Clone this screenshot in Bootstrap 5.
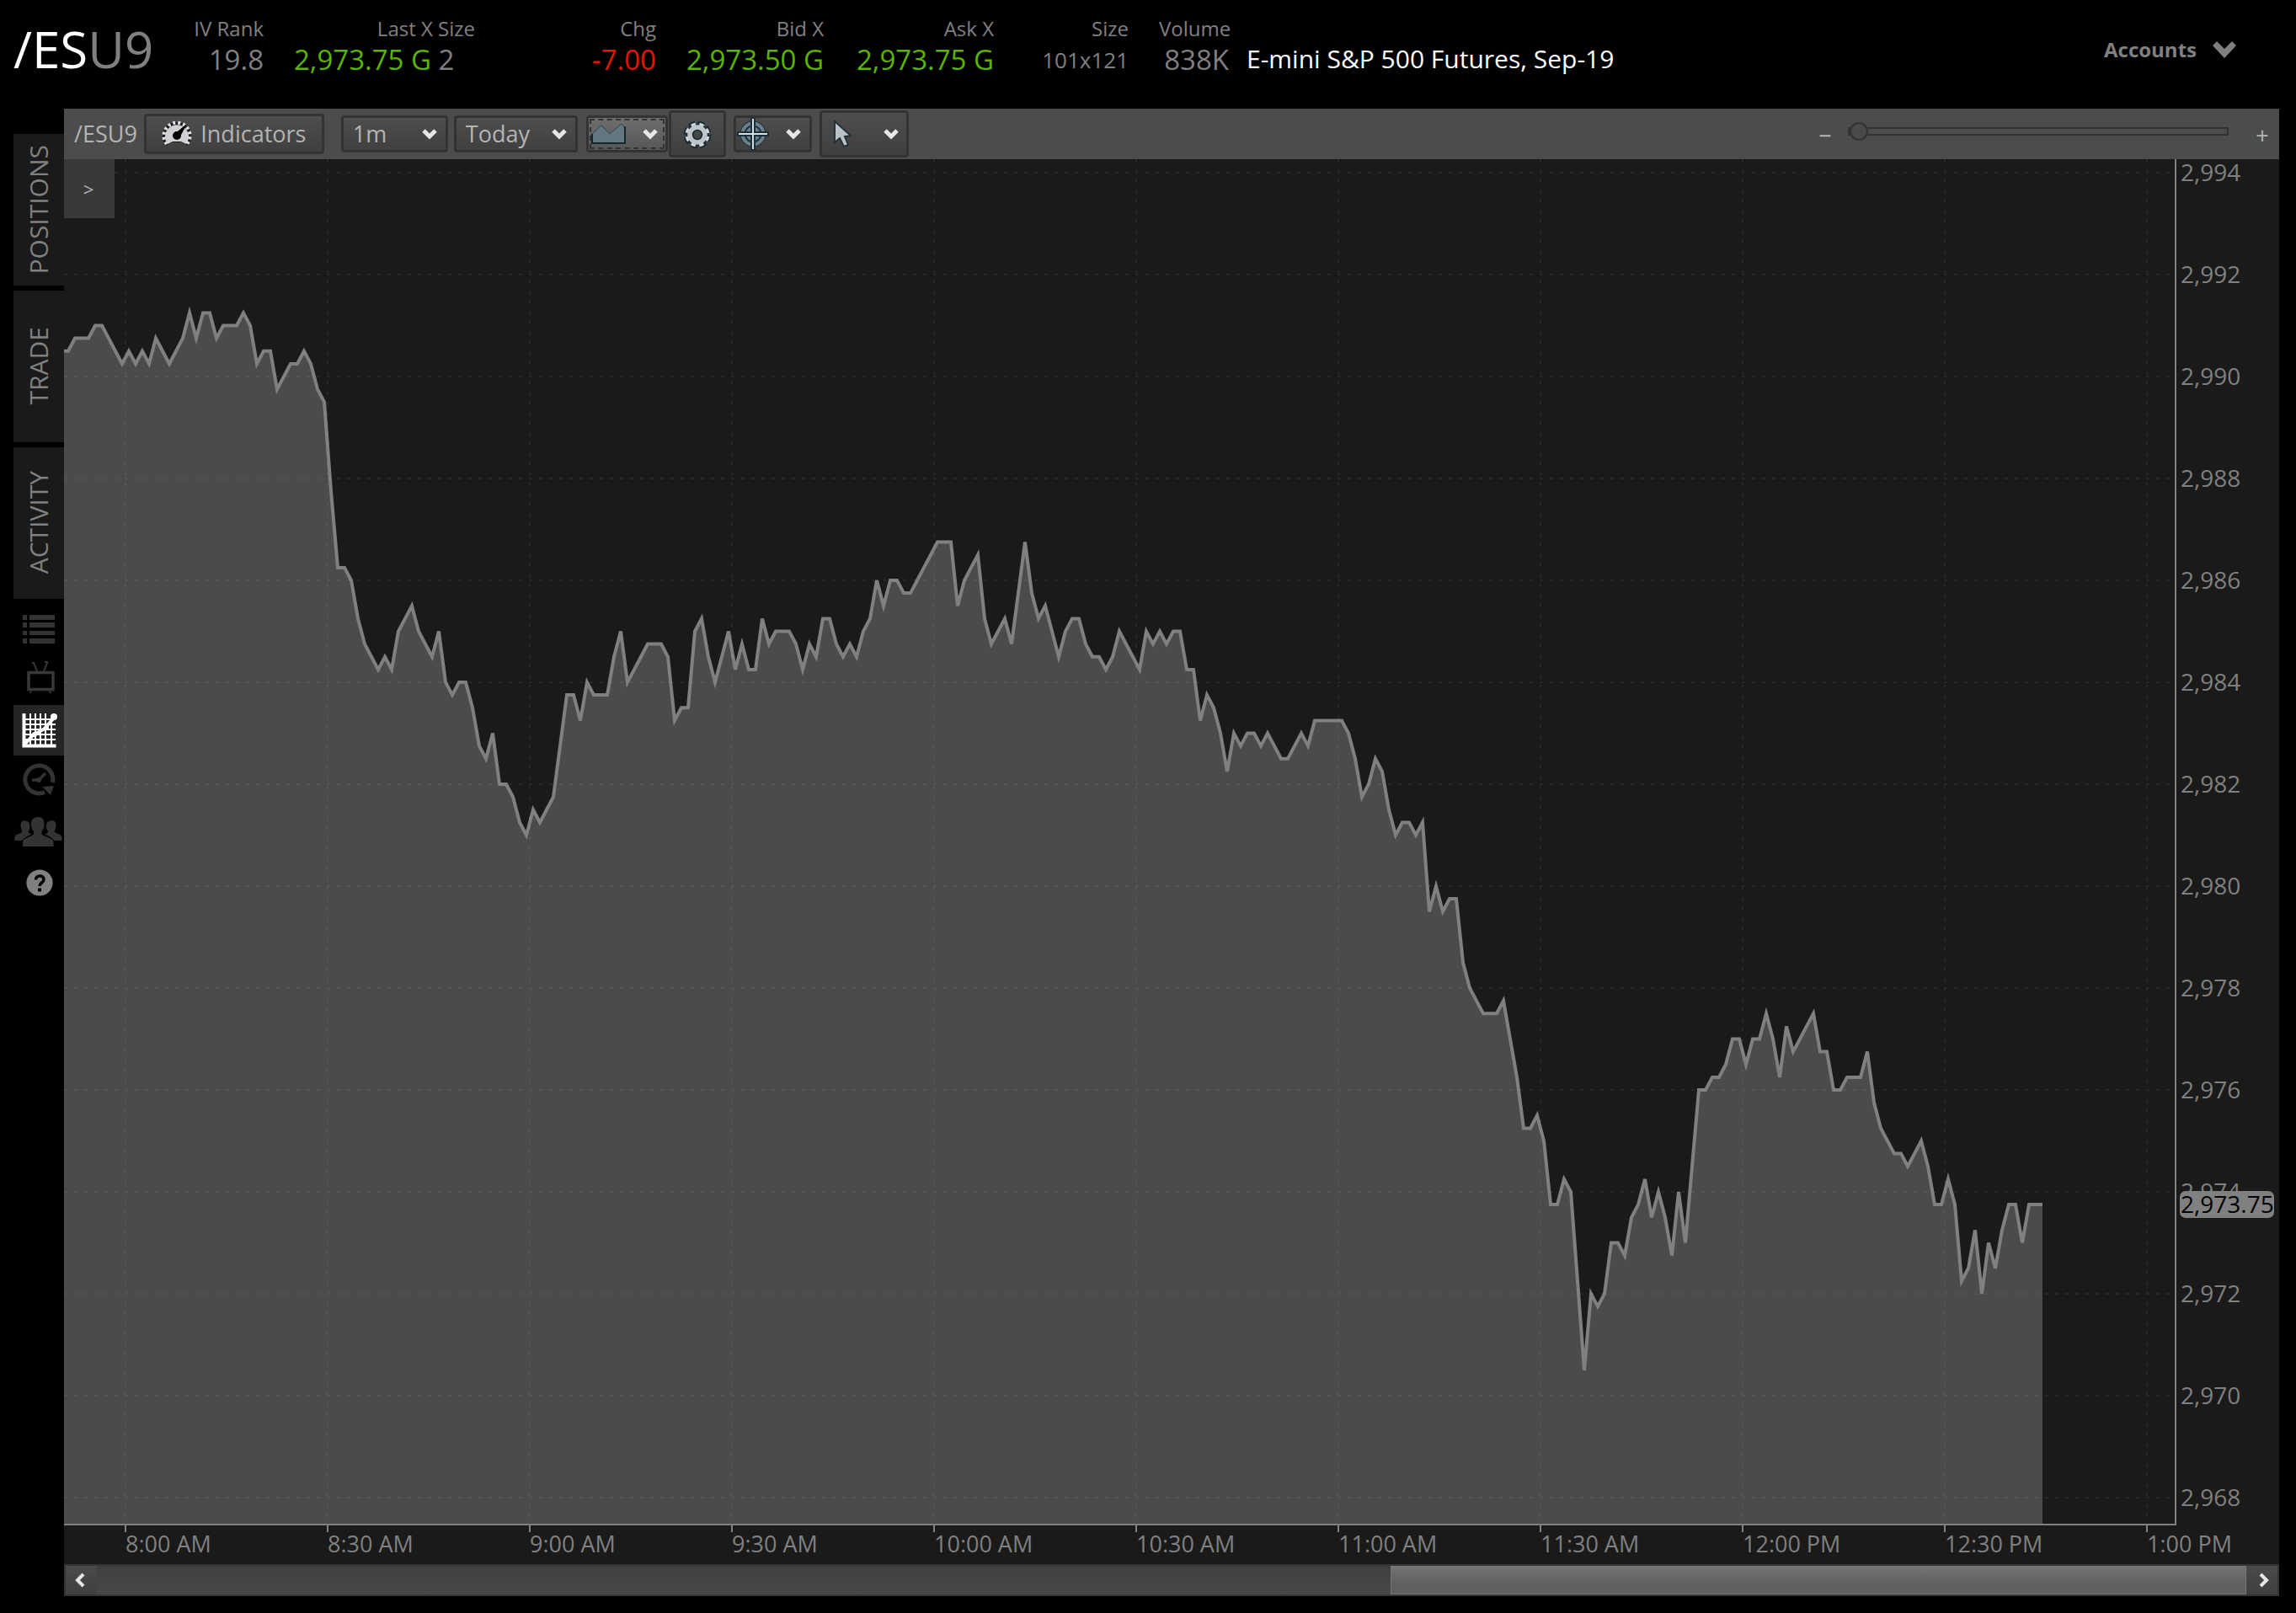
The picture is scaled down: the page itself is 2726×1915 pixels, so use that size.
<!DOCTYPE html>
<html lang="en">
<head>
<meta charset="utf-8">
<meta name="viewport" content="width=device-width, initial-scale=1">
<title>/ESU9 chart</title>
<link href="https://cdn.jsdelivr.net/npm/bootstrap@5.3.0/dist/css/bootstrap.min.css" rel="stylesheet">
<style>
  body { background: #000; color: #808080; font-family: "Open Sans", "Noto Sans", sans-serif; font-size: 27px; line-height: 36px; }
  .quote-bar { height: 129px; padding: 0 68px 0 16px; }
  .symbol { font-size: 60px; line-height: 80px; width: 212px; margin-top: 18px; }
  .quote { gap: 36px; padding-top: 18px; }
  .quote-item { text-align: right; white-space: nowrap; font-size: 33px; line-height: 42px; }
  .quote-item dt { font-size: 24px; line-height: 32px; font-weight: 400; }
  .quote-item dd { margin: 0; }
  .q-iv { width: 85px; } .q-last { width: 215px; } .q-chg { width: 179px; } .q-bid { width: 163px; }
  .q-ask { width: 166px; } .q-size { width: 124px; } .q-vol { width: 83px; }
  .q-size dd { font-size: 26px; }
  .up { color: #5ab400; } .down { color: #e01800; }
  .instrument { font-size: 30px; line-height: 40px; margin: 50px 0 0 21px; color: #fff; white-space: nowrap; }
  .accounts { font-weight: 700; font-size: 24px; line-height: 36px; color: #808080; background: none; border: 0; padding: 0; margin-top: 41px; gap: 18px; }

  .side { width: 60px; margin-left: 16px; padding-top: 30px; gap: 6px; }
  .side-tab { height: 180px; width: 60px; background: #1a1a1a; color: #808080; border: 0; padding: 6px 0 0; font-size: 30px; }
  .side-tab span { writing-mode: vertical-rl; transform: rotate(180deg); line-height: 60px; }
  .side-icon { display: block; width: 60px; height: 60px; border: 0; padding: 0; background: none; }
  .side-icon.active { background: #252525; }
  .side-icon svg { display: block; }

  .panel { margin-right: 20px; margin-bottom: 20px; background: #1a1a1a; }
  .tools { height: 60px; background: #4c4c4c; color: #b4b4b4; padding: 0 11px 0 12px; }
  .tool { height: 44px; border: 3px solid #333; border-radius: 4px; background: linear-gradient(#4e4e4e, #3f3f3f); color: #b4b4b4; padding: 0; font-size: 27px; line-height: 34px; }
  .tool.tall { height: 56px; } .tool.wide { height: 48px; }
  select.tool { appearance: none; padding-left: 11px; background: url("data:image/svg+xml,%3Csvg xmlns='http://www.w3.org/2000/svg' viewBox='0 0 20 14'%3E%3Cpath d='M3 3l7 7 7-7' fill='none' stroke='%23e6e6e6' stroke-width='5'/%3E%3C/svg%3E") no-repeat right 9px center / 20px 14px, linear-gradient(#4e4e4e, #3f3f3f); }
  .t-ind { width: 214px; margin-left: 8px; gap: 10px; }
  .t-int { width: 127px; margin-left: 20px; }
  .t-rng { width: 147px; margin-left: 7px; }
  .t-type { width: 97px; margin-left: 10px; padding: 0 8px 0 3px; background: linear-gradient(#6e6e6e, #565656); outline: 2px dashed #333; outline-offset: -6px; }
  .t-gear { width: 68px; margin-left: 1px; }
  .t-cross { width: 93px; margin-left: 9px; padding: 0 9px 0 1px; }
  .t-ptr { width: 106px; margin-left: 9px; padding: 0 8px 0 13px; }
  .zoom-sign { background: none; border: 0; color: #b4b4b4; padding: 0; width: 18px; line-height: 36px; margin-top: 4px; }
  .zoom-range { appearance: none; background: none; width: 452px; height: 24px; margin: 0 31px 6px 18px; }
  .zoom-range::-webkit-slider-runnable-track { height: 10px; border: 2px solid #333; background: #4c4c4c; }
  .zoom-range::-webkit-slider-thumb { appearance: none; width: 22px; height: 22px; margin-top: -8px; border: 2px solid #333; border-radius: 50%; background: #4a4a4a; }

  .plot { min-height: 400px; position: relative; }
  .plot > svg { position: absolute; inset: 0; width: 100%; height: 100%; display: block; overflow: visible; }
  .plot text { font-size: 27px; fill: #808080; }
  .plot .price { font-size: 28px; }
  .plot .last-price { fill: #000; }
  .flyout { position: absolute; left: 0; top: 0; width: 60px; height: 70px; border: 0; padding: 0 2px 0 0; background: #393939; color: #b4b4b4; font-size: 22px; }

  .hscroll { height: 38px; border: 2px solid #333; background: linear-gradient(#3f3f3f, #484848); }
  .hscroll button { width: 37px; border: 0; padding: 0; background: linear-gradient(#4a4a4a, #3f3f3f); }
  .hscroll svg { display: block; margin: 0 auto; }
  .thumb { height: 34px; background: linear-gradient(#737373, #606060 60%); border: 1px solid #777; }
</style>
</head>
<body class="d-flex flex-column min-vh-100">

<header class="quote-bar d-flex align-items-start">
  <div class="symbol"><span class="text-white">/ES</span>U9</div>
  <dl class="quote d-flex mb-0">
    <div class="quote-item q-iv"><dt>IV Rank</dt><dd>19.8</dd></div>
    <div class="quote-item q-last"><dt>Last X Size</dt><dd class="text-start"><span class="up">2,973.75 G</span> 2</dd></div>
    <div class="quote-item q-chg"><dt>Chg</dt><dd class="down">-7.00</dd></div>
    <div class="quote-item q-bid"><dt>Bid X</dt><dd class="up">2,973.50 G</dd></div>
    <div class="quote-item q-ask"><dt>Ask X</dt><dd class="up">2,973.75 G</dd></div>
    <div class="quote-item q-size"><dt>Size</dt><dd>101x121</dd></div>
    <div class="quote-item q-vol"><dt>Volume</dt><dd>838K</dd></div>
  </dl>
  <div class="instrument">E-mini S&amp;P 500 Futures, Sep-19</div>
  <button class="accounts d-flex align-items-center ms-auto" type="button">Accounts
    <svg width="32" height="22" viewBox="0 0 32 22" aria-hidden="true"><path d="M1 6l5-5 9 9 9-9 5 5-14 15z" fill="#808080"/></svg>
  </button>
</header>

<main class="d-flex flex-grow-1">
  <nav class="side d-flex flex-column flex-shrink-0" aria-label="Views">
    <button class="side-tab" type="button"><span>POSITIONS</span></button>
    <button class="side-tab" type="button"><span>TRADE</span></button>
    <button class="side-tab" type="button"><span>ACTIVITY</span></button>
    <div>
      <button class="side-icon" type="button" aria-label="Watchlist"><svg width="60" height="60" fill="#333"><path d="M11 13h5v6h-5zM19 13h30v6H19zM11 22h5v6h-5zM19 22h30v6H19zM11 32h5v5h-5zM19 32h30v5H19zM11 41h5v6h-5zM19 41h30v6H19z"/></svg></button>
      <button class="side-icon" type="button" aria-label="Live"><svg width="60" height="60" fill="none" stroke="#383838"><path d="M18 21.500h29v20h-29z" stroke-width="3.500"/><path d="M28 20l-4-10h-2M36 20l4-10M37 9h4M21 43l-1 3M43 43l1 3" stroke-width="2"/></svg></button>
      <button class="side-icon active" type="button" aria-label="Chart"><svg width="60" height="60" fill="none" stroke="#fff"><path d="M20 10v38M26 10v38M32 10v38M38 10v38M45 14v34" stroke-width="2"/><path d="M12.500 10v38.500h38" stroke-width="4"/><path d="M12 17h38M12 23h38M12 29h38M12 35h38M12 41h38" stroke-width="2"/><path d="M14 46l9-10 14-8 12-14" stroke-width="4"/><circle cx="48" cy="14" r="4" fill="#fff" stroke="none"/><circle cx="39" cy="27" r="3" fill="#fff" stroke="none"/><circle cx="25" cy="35" r="3" fill="#fff" stroke="none"/></svg></button>
      <button class="side-icon" type="button" aria-label="History"><svg width="60" height="60" fill="none" stroke="#333"><path d="M46.500 32A16.500 16.500 0 1 0 37 43.500" stroke-width="5"/><path d="M34 37l14-1-4 11z" fill="#333" stroke="none"/><path d="M22 29h8l8-8" stroke-width="3.500"/><circle cx="30" cy="29" r="3" fill="#333" stroke="none"/></svg></button>
      <button class="side-icon" type="button" aria-label="Follow"><svg width="60" height="60" fill="#333"><path d="M29.500 13c5 0 7 3 7 8 0 4-1 7-3 9v3c0 3 14 4 14 10v5H11v-5c0-6 13-7 13-10v-3c-2-2-3-5-3-9 0-5 3-8 8.500-8z"/><path d="M14 18c4 0 5.500 2 5.500 5.500s-1 5-2 6.500c0 2 2 3 4 3.500-5 2-9 4-11.500 7.500H1.500v-4c0-4 8-4 9-7-1-2-2-4-2-7 0-4 2-6 5.500-6zM44 18c-4 0-5 2-5 5.500s1 5 2 6.500c0 2-2 3-4 3.500 5 2 9 4 11.500 7.500h9v-4c0-4-8-4-9-7 1-2 2-4 2-7 0-4-2-6-5.500-6z"/></svg></button>
      <button class="side-icon" type="button" aria-label="Help"><svg width="60" height="60"><circle cx="31" cy="31" r="15.600" fill="#808080"/><path d="M26.500 27.500c0-6 9.500-6 9.500-.5 0 4-5 4-5 8" fill="none" stroke="#000" stroke-width="3.600"/><path d="M29 37.500h4v4h-4z"/></svg></button>
    </div>
  </nav>

  <section class="panel d-flex flex-column flex-grow-1">
    <div class="tools d-flex align-items-center">
      <span>/ESU9</span>
      <button class="tool wide t-ind d-flex align-items-center justify-content-center" type="button">
        <svg width="36" height="32" viewBox="0 0 36 32" aria-hidden="true"><path d="M5 30A17 17 0 1 1 31 30L24 26H12z" fill="#1c1c1c"/><path d="M7 28A14 14 0 1 1 29 28L23 25H13z" fill="#d0d0d4"/><path d="M6 28A15.500 15.500 0 1 1 30 28" fill="none" stroke="#e0e0e4" stroke-width="4" stroke-dasharray="3 3"/><path d="M16 16L29 5l-8 15z" stroke="#000" stroke-width="1"/><circle cx="18" cy="18" r="5"/></svg>
        Indicators
      </button>
      <select class="tool t-int" aria-label="Interval"><option>1m</option></select>
      <select class="tool t-rng" aria-label="Range"><option>Today</option></select>
      <button class="tool t-type d-flex align-items-center justify-content-between" type="button" aria-label="Chart type">
        <svg width="42" height="26" viewBox="0 0 42 26"><path d="M1 25V13L11 3l11 10L36 1l4 4v20z" fill="#62777f"/><path d="M1 13L12 3l10 10L36 1l4 5" fill="none" stroke="#33454d" stroke-width="1"/><path d="M1 13v11h39V4" fill="none" stroke="#14262f" stroke-width="2"/></svg>
        <svg width="20" height="14"><path d="M3 3l7 7 7-7" fill="none" stroke="#e6e6e6" stroke-width="5"/></svg>
      </button>
      <button class="tool tall t-gear" type="button" aria-label="Settings">
        <svg width="34" height="34" viewBox="-17 -17 34 34"><circle r="12.500" fill="none" stroke="#1d2d35" stroke-width="8" stroke-dasharray="7 2.818"/><circle r="9" fill="none" stroke="#1d2d35" stroke-width="9"/><circle r="12" fill="none" stroke="#d3d8da" stroke-width="5" stroke-dasharray="5 4.425" stroke-dashoffset="-2"/><circle r="9" fill="none" stroke="#bcc5c9" stroke-width="5.500"/></svg>
      </button>
      <button class="tool t-cross d-flex align-items-center justify-content-between" type="button" aria-label="Crosshair">
        <svg width="38" height="38" viewBox="-19 -19 38 38"><circle r="15.500" fill="#1b3038"/><circle r="12.500" fill="none" stroke="#6a818b" stroke-width="4"/><circle r="6.500" fill="none" stroke="#6a818b" stroke-width="4"/><path d="M-19 0h38M0-19v38" stroke="#1b3038" stroke-width="6"/><path d="M-17 0h34M0-18v36" stroke="#d6dcde" stroke-width="2"/></svg>
        <svg width="20" height="14"><path d="M3 3l7 7 7-7" fill="none" stroke="#e6e6e6" stroke-width="5"/></svg>
      </button>
      <button class="tool tall t-ptr d-flex align-items-center justify-content-between" type="button" aria-label="Pointer">
        <svg width="24" height="34" viewBox="0 0 24 34"><path d="M2 2v25l6-5 5 10 5-2-4-10 7-1z" fill="#b9c3c8" stroke="#22323a" stroke-width="2"/></svg>
        <svg width="20" height="14"><path d="M3 3l7 7 7-7" fill="none" stroke="#e6e6e6" stroke-width="5"/></svg>
      </button>
      <button class="zoom-sign ms-auto" type="button" aria-label="Zoom out">−</button>
      <input class="zoom-range" type="range" min="0" max="100" value="0" aria-label="Zoom">
      <button class="zoom-sign" type="button" aria-label="Zoom in">+</button>
    </div>

    <div class="plot flex-grow-1">
      <svg id="chart" role="img" aria-label="/ESU9 price, one minute"></svg>
      <button class="flyout" type="button">&gt;</button>
    </div>

    <div class="hscroll d-flex" role="scrollbar" aria-controls="chart" aria-valuenow="100">
      <button type="button" aria-label="Scroll left"><svg width="20" height="20"><path d="M12 3l-7 7 7 7" fill="none" stroke="#e6e6e6" stroke-width="4"/></svg></button>
      <div class="flex-grow-1 d-flex justify-content-end"><div class="thumb" style="width:39.8%"></div></div>
      <button type="button" aria-label="Scroll right"><svg width="20" height="20"><path d="M8 3l7 7-7 7" fill="none" stroke="#e6e6e6" stroke-width="4"/></svg></button>
    </div>
  </section>
</main>

<script src="https://cdn.jsdelivr.net/npm/bootstrap@5.3.0/dist/js/bootstrap.bundle.min.js"></script>
<script>
// One-minute closes, in points above 2,960; the first bar is 7:51 AM.
const closes = [
  30.5,30.5,30.75,30.75,30.75,31,31,30.75,30.5,
  30.25,30.5,30.25,30.5,30.25,30.75,30.5,30.25,30.5,30.75,31.25,30.75,31.25,31.25,30.75,31,31,31,31.25,31,30.25,30.5,30.5,29.75,30,30.25,30.25,30.5,30.25,29.75,
  29.5,27.75,26.25,26.25,26,25.25,24.75,24.5,24.25,24.5,24.25,25,25.25,25.5,25,24.75,24.5,25,24,23.75,24,24,23.5,22.75,22.5,23,22,22,21.75,21.25,
  21,21.5,21.25,21.5,21.75,22.75,23.75,23.75,23.25,24,23.75,23.75,23.75,24.5,25,24,24.25,24.5,24.75,24.75,24.75,24.5,23.25,23.5,23.5,25,25.25,24.5,24,24.5,
  25,24.25,24.75,24.25,24.25,25.25,24.75,25,25,25,24.75,24.25,24.75,24.5,25.25,25.25,24.75,24.5,24.75,24.5,25,25.25,26,25.5,26,26,25.75,25.75,26,26.25,
  26.5,26.75,26.75,26.75,25.5,26,26.25,26.5,25.25,24.75,25,25.25,24.75,25.75,26.75,25.75,25.25,25.5,25,24.5,25,25.25,25.25,24.75,24.5,24.5,24.25,24.5,25,24.75,
  24.5,24.25,25,24.75,25,24.75,25,25,24.25,24.25,23.25,23.75,23.5,23,22.25,23,22.75,23,23,22.75,23,22.75,22.5,22.5,22.75,23,22.75,23.25,23.25,23.25,
  23.25,23.25,23,22.5,21.75,22,22.5,22.25,21.5,21,21.25,21.25,21,21.25,19.5,20,19.5,19.75,19.75,18.5,18,17.75,17.5,17.5,17.5,17.75,17,16.25,15.25,15.25,
  15.5,15,13.75,13.75,14.25,14,12.25,10.5,12,11.75,12,13,13,12.75,13.5,13.75,14.25,13.5,14,13.5,12.75,14,13,14.5,16,16,16.25,16.25,16.5,17,
  17,16.5,17,17,17.5,17,16.25,17.25,16.75,17,17.25,17.5,16.75,16.75,16,16,16.25,16.25,16.25,16.75,15.75,15.25,15,14.75,14.75,14.5,14.75,15,14.5,13.75,
  13.75,14.25,13.75,12.25,12.5,13.25,12,13,12.5,13.25,13.75,13.75,13,13.75,13.75,13.75
];
const times = ["8:00 AM","8:30 AM","9:00 AM","9:30 AM","10:00 AM","10:30 AM","11:00 AM","11:30 AM","12:00 PM","12:30 PM","1:00 PM"];
const svg = document.getElementById("chart");

function draw() {
  const w = svg.clientWidth, h = svg.clientHeight;
  const right = w - 123, bottom = h - 47;
  const perMin = (right - 73) / 304.25;
  const x = m => 73 + m * perMin;
  const y = p => 16 + (34 - p) * (bottom - 48) / 26;
  // each close is plotted at the middle of its bar
  const pts = closes.map((c, i) => [Math.max(0, x(i - 9.5)), y(c)]);
  const path = pts.map(p => p[0].toFixed(1) + "," + p[1].toFixed(1)).join(" L");
  const endX = pts[pts.length - 1][0];
  let s = `<path d="M${path} L${endX},${bottom} L0,${bottom}Z" fill="#4b4b4b"/>`;
  s += `<path d="M${path}" fill="none" stroke="#808080" stroke-width="4"/>`;
  let grid = "", ticks = "", labels = "";
  times.forEach((t, i) => {
    const tx = Math.round(x(i * 30));
    grid += `M${tx} 0V${bottom}`;
    ticks += `M${tx} ${bottom}v9`;
    labels += `<text x="${tx}" y="${bottom + 33}">${t}</text>`;
  });
  for (let p = 34; p >= 8; p -= 2) {
    const ty = Math.round(y(p));
    grid += `M0 ${ty}H${right}`;
    labels += `<text class="price" x="${right + 6}" y="${ty + 10}">2,9${60 + p}</text>`;
  }
  s += `<path d="${grid}" stroke="#fff" stroke-opacity=".055" stroke-width="2" stroke-dasharray="4 8"/>`;
  s += `<path d="M0 ${bottom}H${right}V0${ticks}" fill="none" stroke="#808080" stroke-width="2"/>` + labels;
  const ly = Math.round(y(13.75));
  s += `<rect x="${right + 5}" y="${ly - 16}" width="112" height="32" rx="7" fill="#808080"/>`;
  s += `<text class="price last-price" x="${right + 6}" y="${ly + 10}">2,973.75</text>`;
  svg.innerHTML = s;
}
draw();
window.addEventListener("resize", draw);
</script>
</body>
</html>
